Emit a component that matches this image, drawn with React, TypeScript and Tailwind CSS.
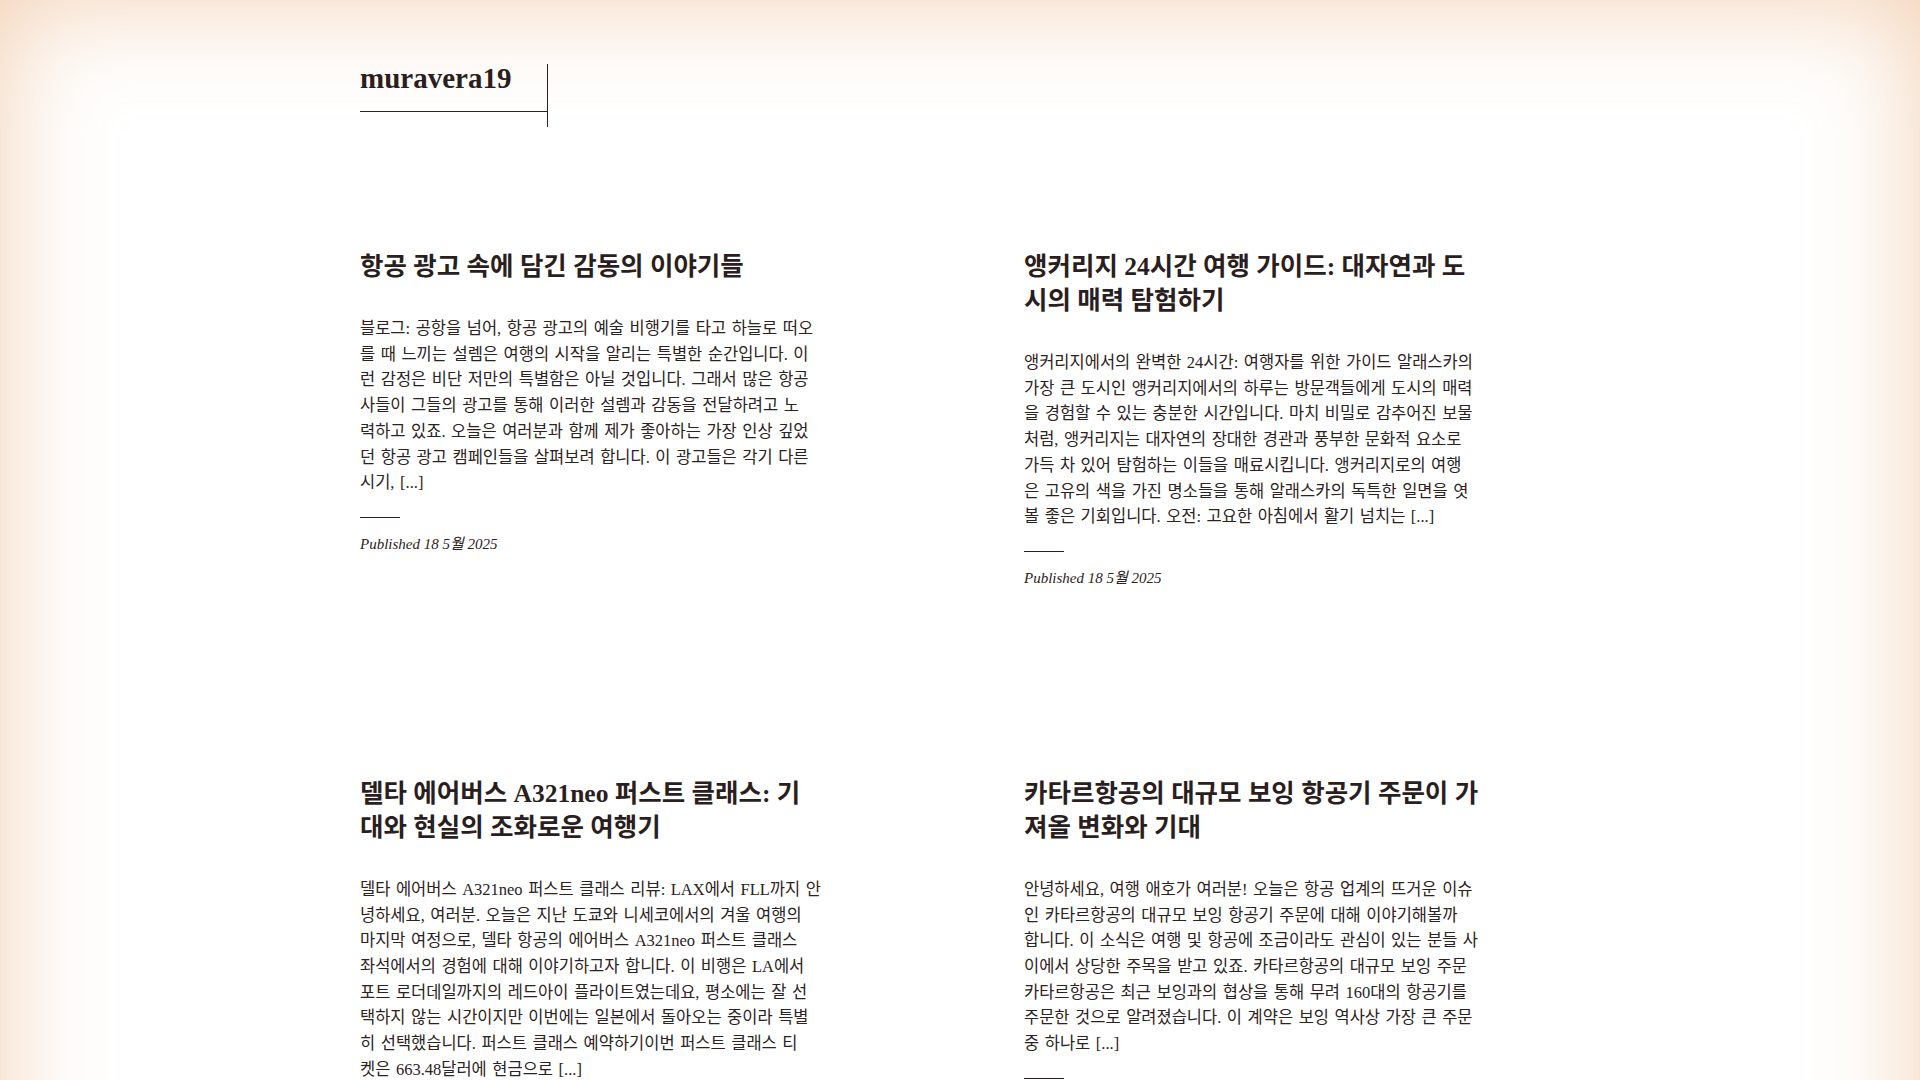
const posts = [
	{
		title: '항공 광고 속에 담긴 감동의 이야기들',
		excerpt: [
			'블로그: 공항을 넘어, 항공 광고의 예술 비행기를 타고 하늘로 떠오',
			'를 때 느끼는 설렘은 여행의 시작을 알리는 특별한 순간입니다. 이',
			'런 감정은 비단 저만의 특별함은 아닐 것입니다. 그래서 많은 항공',
			'사들이 그들의 광고를 통해 이러한 설렘과 감동을 전달하려고 노',
			'력하고 있죠. 오늘은 여러분과 함께 제가 좋아하는 가장 인상 깊었',
			'던 항공 광고 캠페인들을 살펴보려 합니다. 이 광고들은 각기 다른',
			'시기, [...]',
		],
		date: '18 5월 2025',
	},
	{
		title: '앵커리지 24시간 여행 가이드: 대자연과 도시의 매력 탐험하기',
		excerpt: [
			'앵커리지에서의 완벽한 24시간: 여행자를 위한 가이드 알래스카의',
			'가장 큰 도시인 앵커리지에서의 하루는 방문객들에게 도시의 매력',
			'을 경험할 수 있는 충분한 시간입니다. 마치 비밀로 감추어진 보물',
			'처럼, 앵커리지는 대자연의 장대한 경관과 풍부한 문화적 요소로',
			'가득 차 있어 탐험하는 이들을 매료시킵니다. 앵커리지로의 여행',
			'은 고유의 색을 가진 명소들을 통해 알래스카의 독특한 일면을 엿',
			'볼 좋은 기회입니다. 오전: 고요한 아침에서 활기 넘치는 [...]',
		],
		date: '18 5월 2025',
	},
	{
		title: '델타 에어버스 A321neo 퍼스트 클래스: 기대와 현실의 조화로운 여행기',
		excerpt: [
			'델타 에어버스 A321neo 퍼스트 클래스 리뷰: LAX에서 FLL까지 안',
			'녕하세요, 여러분. 오늘은 지난 도쿄와 니세코에서의 겨울 여행의',
			'마지막 여정으로, 델타 항공의 에어버스 A321neo 퍼스트 클래스',
			'좌석에서의 경험에 대해 이야기하고자 합니다. 이 비행은 LA에서',
			'포트 로더데일까지의 레드아이 플라이트였는데요, 평소에는 잘 선',
			'택하지 않는 시간이지만 이번에는 일본에서 돌아오는 중이라 특별',
			'히 선택했습니다. 퍼스트 클래스 예약하기이번 퍼스트 클래스 티',
			'켓은 663.48달러에 현금으로 [...]',
		],
		date: '18 5월 2025',
	},
	{
		title: '카타르항공의 대규모 보잉 항공기 주문이 가져올 변화와 기대',
		excerpt: [
			'안녕하세요, 여행 애호가 여러분! 오늘은 항공 업계의 뜨거운 이슈',
			'인 카타르항공의 대규모 보잉 항공기 주문에 대해 이야기해볼까',
			'합니다. 이 소식은 여행 및 항공에 조금이라도 관심이 있는 분들 사',
			'이에서 상당한 주목을 받고 있죠. 카타르항공의 대규모 보잉 주문',
			'카타르항공은 최근 보잉과의 협상을 통해 무려 160대의 항공기를',
			'주문한 것으로 알려졌습니다. 이 계약은 보잉 역사상 가장 큰 주문',
			'중 하나로 [...]',
		],
		date: '18 5월 2025',
	},
];

interface IPostCardProps {
	title: string;
	excerpt: string[];
	date: string;
}

function PostCard({ title, excerpt, date }: IPostCardProps) {
	return (
		<article className="max-w-[461px]">
			<h2 className="pt-[2px] text-[25.5px] font-semibold leading-[34px] text-[#2a1e1e]">
				{title}
			</h2>

			{/* line breaks follow the original excerpt wrap */}
			<p className="mt-[32px] whitespace-nowrap text-[16.5px] leading-[25.7px] text-[#2b2222] [word-spacing:1.4px]">
				{excerpt.map((line, i) => (
					<span key={i} className="block">
						{line}
					</span>
				))}
			</p>

			<div className="mt-[21px] h-px w-10 bg-[#2a1e1e]" />

			<p className="mt-[16px] text-[15px] italic leading-5 text-[#2b2222]">
				Published {date}
			</p>
		</article>
	);
}

export default function App() {
	return (
		<div className="min-h-screen bg-white font-['Liberation_Serif','Noto_Sans_CJK_KR',serif] shadow-[inset_0_0_110px_rgba(226,150,86,0.45)]">
			<div className="mx-auto max-w-[1200px] pb-[200px]">
				<header className="flex items-start pt-[60px]">
					<div className="w-[187px] border-b border-[#2a1e1e] pb-[15px]">
						<a
							href="#"
							className="text-[29px] font-bold leading-[36px] text-[#2a1e1e]"
						>
							muravera19
						</a>
					</div>
					{/* the right rule runs past the bottom one */}
					<div className="mt-[4px] h-[63px] w-px bg-[#2a1e1e]" />
				</header>

				<main className="mt-[121px] grid grid-cols-2 gap-x-[128px] gap-y-[187px]">
					{posts.map((post) => (
						<PostCard key={post.title} {...post} />
					))}
				</main>
			</div>
		</div>
	);
}
